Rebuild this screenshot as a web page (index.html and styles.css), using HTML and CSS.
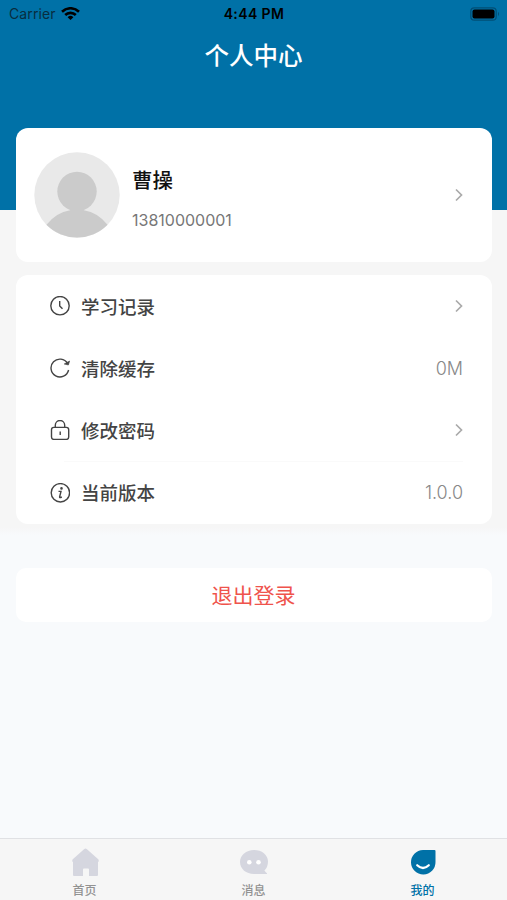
FILE: index.html
```html
<!DOCTYPE html>
<html lang="zh-CN">
<head>
  <meta charset="UTF-8">
  <title>个人中心</title>
  <link rel="stylesheet" href="styles.css">
</head>
<body>
<main class="profile-page">
  <!-- Status bar -->
  <header class="status-bar">
    <div class="carrier">
      <span>Carrier</span>
      <svg width="19" height="14" viewBox="0 0 19 14" fill="none" stroke="#000" stroke-width="2.6">
        <path d="M1 4.7a12.2 12.2 0 0 1 17 0"/>
        <path d="M4.2 8a7.6 7.6 0 0 1 10.6 0"/>
        <path d="M9.5 13L6.6 10.2a4.2 4.2 0 0 1 5.8 0z" fill="#000" stroke="none"/>
      </svg>
    </div>
    <span class="time">4:44 PM</span>
    <svg class="battery" width="31" height="14" viewBox="0 0 31 14">
      <rect x=".8" y=".8" width="25.4" height="12.4" rx="3.5" fill="none" stroke="#004f76" stroke-width="1.2"/>
      <rect x="2.5" y="2.5" width="22" height="9" rx="2" fill="#000"/>
      <path d="M28 4.8q2 2.2 0 4.4z" fill="#004f76"/>
    </svg>
  </header>
  <h1>个人中心</h1>

  <!-- User card -->
  <section class="card user-card">
    <svg class="avatar" width="86" height="86" viewBox="0 0 86 86">
      <circle cx="43" cy="43" r="42.7" fill="#e9e9e9"/>
      <circle cx="43" cy="39.5" r="19.7" fill="#cbcbcb"/>
      <path d="M12.5 72.8Q22 60.5 36 58.2Q37.5 57.5 36 56H50Q48.5 57.5 50 58.2Q64 60.5 73.5 72.8A42.7 42.7 0 0 1 12.5 72.8z" fill="#cbcbcb"/>
    </svg>
    <div class="user-info">
      <h2>曹操</h2>
      <p>13810000001</p>
    </div>
    <svg class="arrow" width="8" height="14" viewBox="0 0 8 14"><path d="M1 1.5L6.5 7L1 12.5"/></svg>
  </section>

  <!-- Settings -->
  <ul class="card menu">
    <li>
      <svg class="icon" width="20" height="20" viewBox="0 0 20 20">
        <circle cx="10" cy="9.7" r="9.2"/>
        <path d="M9.7 5V10L12.5 12.8"/>
      </svg>
      <span class="label">学习记录</span>
      <svg class="arrow" width="8" height="14" viewBox="0 0 8 14"><path d="M1 1.5L6.5 7L1 12.5"/></svg>
    </li>
    <li>
      <svg class="icon" width="20" height="20" viewBox="0 0 20 20">
        <path d="M18.6 12A8.9 8.9 0 1 1 17.6 5.5"/>
        <path d="M14.2 6L18.4 7L19.6 3z" class="dot" stroke-width=".6"/>
      </svg>
      <span class="label">清除缓存</span>
      <span class="value">0M</span>
    </li>
    <li>
      <svg class="icon" width="20" height="20" viewBox="0 0 20 20">
        <rect x="1.5" y="7.4" width="17.2" height="12" rx="2.3"/>
        <path d="M5.3 7.2V5.2A4.7 4.7 0 0 1 14.7 5.2V7.2M10.2 11.5V15"/>
      </svg>
      <span class="label">修改密码</span>
      <svg class="arrow" width="8" height="14" viewBox="0 0 8 14"><path d="M1 1.5L6.5 7L1 12.5"/></svg>
    </li>
    <li>
      <svg class="icon" width="20" height="20" viewBox="0 0 20 20">
        <circle cx="10.4" cy="9.8" r="9.2"/>
        <path d="M8.5 8.4H11L9.6 13.8Q9.4 15.2 11.8 14" stroke-width="1.4"/>
        <circle cx="11.5" cy="5.4" r=".6" class="dot"/>
      </svg>
      <span class="label">当前版本</span>
      <span class="value">1.0.0</span>
    </li>
  </ul>

  <button class="logout">退出登录</button>

  <!-- Tab bar -->
  <nav class="tab-bar">
    <a>
      <svg width="30" height="30" viewBox="0 0 30 30" fill="#d5d6df">
        <path d="M15.5 1.5Q16.2 1.5 17 2.2L28.5 12.5Q29.5 14.5 28 15V28Q28 29 27 29H19V22.5Q19 21.5 18 21.5H14Q13 21.5 13 22.5V29H4Q3 29 3 28V15Q1.5 14.5 2.5 12.5L14 2.2Q14.8 1.5 15.5 1.5z"/>
      </svg>
      <span>首页</span>
    </a>
    <a>
      <svg width="30" height="30" viewBox="0 0 30 30">
        <path d="M15 3C22.8 3 29 7.8 29 14.5Q29 20 25.4 23.5Q26.5 25.3 28 26.2Q28.3 27 27 27H15C7.2 27 1 22 1 15S7.2 3 15 3z" fill="#d5d6df"/>
        <circle cx="10.3" cy="15.2" r="2.3" fill="#fff"/>
        <circle cx="19.5" cy="15.2" r="2.3" fill="#fff"/>
      </svg>
      <span>消息</span>
    </a>
    <a class="active">
      <svg width="30" height="30" viewBox="0 0 30 30">
        <path d="M15 3H26.5Q27.5 3 27.5 4V15A12.25 12.25 0 1 1 15 3z" fill="#0071a7"/>
        <path d="M9.2 18.2Q15 23.8 20.8 18.2" fill="none" stroke="#fff" stroke-width="2.2" stroke-linecap="round"/>
      </svg>
      <span>我的</span>
    </a>
  </nav>
</main>
</body>
</html>
```

FILE: styles.css
```css
* {
    box-sizing: border-box;
}
body {
    margin: 0;
    font-family: Inter, 'Noto Sans CJK SC', sans-serif;
    color: #333;
}
h1, h2, p, ul {
    margin: 0;
    padding: 0;
    list-style: none;
}
svg {
    display: block;
    flex-shrink: 0;
}
.profile-page {
    display: flex;
    flex-direction: column;
    height: 900px;
    background: linear-gradient(#0071a7 210px, #f6f6f6 210px, #f6f6f6 527px, #f8fafc 535px);
}
.status-bar {
    display: grid;
    grid-template-columns: 1fr auto 1fr;
    align-items: center;
    height: 27px;
    padding: 0 6px 0 9px;
    font-size: 14px;
    color: #000;
}
.carrier {
    display: flex;
    align-items: center;
    gap: 5px;
    letter-spacing: 0.1px;
    color: #082d40;
}
.time {
    margin-right: 2px;
    font-weight: 600;
    letter-spacing: 0.4px;
}
.battery {
    justify-self: end;
}
h1 {
    height: 101px;
    line-height: 58px;
    text-align: center;
    font-size: 24.5px;
    font-weight: 500;
    color: #fff;
}
.card {
    margin: 0 15px 0 16px;
    background: #fff;
    border-radius: 12px;
}
.user-card {
    display: flex;
    align-items: center;
    height: 134px;
    padding: 0 29px 0 18px;
}
.user-info {
    flex: 1;
    margin-left: 12px;
    padding-top: 5px;
}
.user-info h2 {
    line-height: 30px;
    font-size: 20.5px;
    font-weight: 500;
    color: #111;
}
.user-info p {
    margin-top: 14px;
    line-height: 20px;
    font-size: 16px;
    color: #777;
}
.arrow {
    fill: none;
    stroke: #aaa;
    stroke-width: 1.7;
}
.menu {
    margin-top: 13px;
    padding: 0 29px 0 34px;
}
.menu li {
    display: flex;
    align-items: center;
    height: 62.2px;
}
.menu li:nth-child(3) {
    background: linear-gradient(#fafafa, #fafafa) right bottom / 399px 1px no-repeat;
}
.icon {
    fill: none;
    stroke: #444;
    stroke-width: 1.4;
}
.icon .dot {
    fill: #444;
}
.label {
    flex: 1;
    margin-left: 11px;
    padding-bottom: 1px;
    font-size: 18.5px;
    font-weight: 500;
    color: #444;
}
.value {
    font-size: 18px;
    font-weight: 300;
    color: #888;
}
.logout {
    height: 54px;
    margin: 44px 15px 0 16px;
    padding: 0 1px 2px 0;
    border: 0;
    border-radius: 10px;
    background: #fff;
    font-family: inherit;
    font-size: 21px;
    color: #ef534c;
}
.tab-bar {
    display: grid;
    grid-template-columns: repeat(3, 1fr);
    height: 62px;
    margin-top: auto;
    padding-top: 8px;
    border-top: 1px solid #e0e1e4;
    background: #f6f6f6;
}
.tab-bar a {
    display: flex;
    flex-direction: column;
    align-items: center;
    height: 53px;
    font-size: 12px;
    line-height: 28px;
    font-weight: 500;
    color: #929292;
}
.tab-bar .active {
    color: #0071a7;
}
```
